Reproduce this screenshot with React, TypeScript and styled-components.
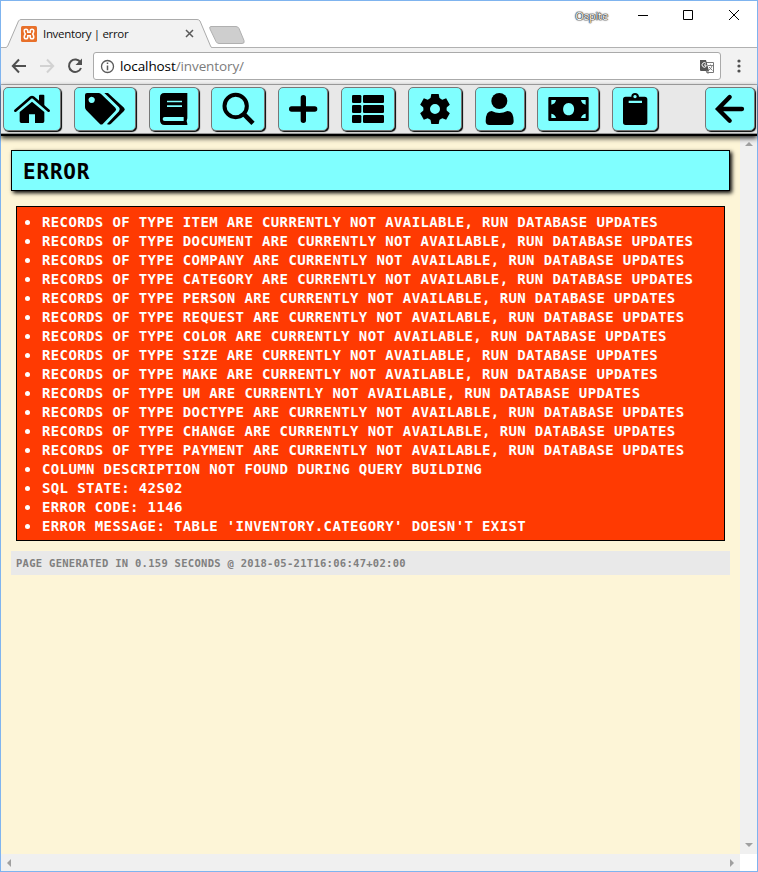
import React from "react";
import styled, { createGlobalStyle } from "styled-components";

const Global = createGlobalStyle`
  * { box-sizing: border-box; }
  html, body { margin: 0; padding: 0; }
  body { width: 758px; height: 872px; overflow: hidden; background: #fff; }
  ul, h1, p { margin: 0; padding: 0; }
`;

const BrowserWindow = styled.div`
  display: flex;
  flex-direction: column;
  width: 758px;
  height: 872px;
  border: 1px solid #7fb4ef;
  background: #fff;
  font-family: "Open Sans", "Noto Sans", sans-serif;
`;

const TitleBar = styled.header`
  display: flex;
  height: 47px;
  flex: none;
  border-bottom: 1px solid #b1b1b1;
`;

const Tab = styled.div`
  position: relative;
  display: flex;
  align-items: center;
  width: 206px;
  height: 29px;
  margin: 18px 0 -1px 5px;
  padding: 0 18px 0 15px;
`;

const TabShape = styled.svg`
  position: absolute;
  inset: 0;
`;

const Favicon = styled.svg`
  position: relative;
  flex: none;
`;

const TabTitle = styled.span`
  position: relative;
  flex: 1;
  margin-left: 6px;
  font-size: 11.5px;
  line-height: 16px;
  letter-spacing: -0.32px;
  color: #111;
  white-space: nowrap;
`;

const TabClose = styled.svg`
  position: relative;
  flex: none;
`;

const NewTab = styled.svg`
  flex: none;
  margin: 24px 0 0 -4px;
`;

const WindowControls = styled.div`
  display: flex;
  align-items: flex-start;
  margin-left: auto;
`;

const ProfileName = styled.span`
  margin: 7px 11px 0 0;
  font-size: 11px;
  line-height: 16px;
  letter-spacing: -0.1px;
  color: #fff;
  text-shadow: 0 0 1px #222, 0 0 1px #222, 0 0 1px #222, 0 0 2px #555;
`;

const ControlIcon = styled.svg`
  flex: none;
  margin: 8px 17px 0;
`;

const NavBar = styled.nav`
  display: flex;
  align-items: center;
  height: 37px;
  flex: none;
  padding: 0 9px;
  background: #f2f2f2;
  border-bottom: 1px solid #b4b4b4;
`;

const NavIcon = styled.svg`
  flex: none;
  margin-right: 10px;

  &:nth-of-type(3) {
    margin-right: 9px;
  }
`;

const AddressBar = styled.div`
  display: flex;
  align-items: center;
  width: 628px;
  height: 28px;
  padding: 0 6px;
  border: 1px solid #aaa;
  border-radius: 3px;
  background: #fff;
`;

const Url = styled.span`
  flex: 1;
  margin-left: 5px;
  font-size: 13.5px;
  line-height: 20px;
  letter-spacing: -0.1px;
  color: #7c7c7c;
  white-space: nowrap;
`;

const Host = styled.span`
  color: #000;
`;

const MenuDots = styled.svg`
  flex: none;
  margin-left: 15px;
`;

const Toolbar = styled.div`
  position: relative;
  z-index: 1;
  display: flex;
  gap: 12px;
  height: 51px;
  flex: none;
  padding: 2px 1px 0 2px;
  background: #e8e8e8;
  border-bottom: 2px solid #000;
  box-shadow: inset 0 -1px 0 #999, 0 2px 5px rgba(0, 0, 0, 0.9);
`;

const ToolButton = styled.button<{ $width: number; $tight?: boolean; $end?: boolean }>`
  flex: none;
  width: ${(p) => p.$width}px;
  height: 44px;
  margin: 0 ${(p) => (p.$end ? "1px" : "0")} 0 ${(p) => (p.$end ? "auto" : p.$tight ? "0" : "1px")};
  padding: 0;
  border: 1px solid #777;
  border-radius: 5px;
  background: #80ffff;
  box-shadow: 1px 1px 1px #000;

  &:first-child {
    margin-left: 0;
  }
`;

const ToolIcon = styled.svg`
  display: block;
  width: 100%;
  height: 42px;
`;

const Viewport = styled.div`
  display: grid;
  grid-template-columns: 739px 17px;
  grid-template-rows: 1fr 17px;
  flex: 1;
  min-height: 0;
`;

const Page = styled.main`
  padding: 14px 10px;
  background: #fdf5d7;
  font-family: "DejaVu Sans Mono", monospace;
  font-weight: bold;
  text-transform: uppercase;
`;

const Title = styled.h1`
  width: 719px;
  height: 41px;
  padding-left: 11px;
  border: 1px solid #000;
  background: #80ffff;
  box-shadow: 2px 2px 4px #000;
  font-size: 21px;
  line-height: 42px;
  letter-spacing: 0.8px;
`;

const ErrorList = styled.ul`
  width: 709px;
  margin: 15px 5px 10px;
  padding: 6px 5px 4px;
  border: 1px solid #000;
  background: #ff3a02;
  color: #fff;
  list-style: none;
`;

const ErrorItem = styled.li`
  display: flex;
  align-items: center;
  height: 19px;
  font-size: 14px;
  line-height: 19px;
  letter-spacing: 0.372px;
  white-space: pre;

  &::before {
    content: "";
    width: 5px;
    height: 5px;
    margin: 0 12px 0 3px;
    border-radius: 50%;
    background: #fff;
  }
`;

const Footer = styled.p`
  width: 719px;
  height: 24px;
  padding-left: 5px;
  background: #e9e9e9;
  color: #808080;
  font-size: 10.5px;
  line-height: 24px;
  letter-spacing: 0.287px;
`;

const VerticalScroll = styled.div`
  display: flex;
  flex-direction: column;
  justify-content: space-between;
  align-items: center;
  padding: 6px 0 7px;
  background: #f0f0f0;
`;

const HorizontalScroll = styled.div`
  display: flex;
  justify-content: space-between;
  align-items: center;
  padding: 0 6px;
  background: #f0f0f0;
`;

const Arrow = styled.svg`
  fill: #a0a0a0;
`;

type Tool = { name: string; width: number; tight?: boolean; end?: boolean; box: string; icon: React.ReactNode };

const tools: Tool[] = [
  {
    name: "Home", width: 58, box: "12 24 168 126",
    icon: (
      <>
        <path d="M117 66V47q0-3 3-3h10q3 0 3 3v34z" />
        <path d="M46 92L93 52q3-2 6 0L146 92" fill="none" stroke="#000" strokeWidth="8" strokeLinecap="round" strokeLinejoin="round" />
        <path d="M96 65L133 96v28q0 5-5 5h-23v-26H87v26H64q-5 0-5-5V96z" />
      </>
    ),
  },
  {
    name: "Tags", width: 62, box: "225 24 180 126",
    icon: (
      <>
        <path fillRule="evenodd" d="M261 39h34q5 0 9 4l42 40q5 5 0 10l-37 38q-5 5-10 0l-40-40q-4-4-4-9V45q0-6 6-6zM275 50a9.500 9.500 0 1 0 .1 0z" />
        <path d="M313 39h11l48 44q5 5 0 10l-39 38q-6 5-12 1l36-38q5-6 0-12z" />
      </>
    ),
  },
  {
    name: "Book", width: 50, box: "450 24 144 126",
    icon: (
      <path fillRule="evenodd" d="M493 39h69v76q-4 8 0 16v4h-68q-14 0-14-14V53q0-14 13-14zM501 62v5h45v-5zM501 76v5h45v-5zM494 111q-6 0-6 6t6 6h57v-12z" />
    ),
  },
  {
    name: "Search", width: 54, tight: true, box: "36 24 156 126",
    icon: (
      <>
        <circle cx="107" cy="78" r="33.500" fill="none" stroke="#000" strokeWidth="12" />
        <path d="M133 104L159 130" stroke="#000" strokeWidth="14" />
      </>
    ),
  },
  {
    name: "Add", width: 50, box: "237 24 144 126",
    icon: <path d="M310 53v68M275 87h69" stroke="#000" strokeWidth="16" strokeLinecap="round" />,
  },
  {
    name: "List", width: 54, box: "426 24 156 126",
    icon: (
      <>
        {[45, 75, 105].map((y) => (
          <React.Fragment key={y}>
            <rect x="456" y={y} width="28" height="24" rx="4" />
            <rect x="489" y={y} width="63" height="24" rx="4" />
          </React.Fragment>
        ))}
      </>
    ),
  },
  {
    name: "Settings", width: 54, box: "27 24 156 126",
    icon: (
      <>
        <circle cx="105" cy="87" r="25" fill="none" stroke="#000" strokeWidth="20" />
        {[0, 60, 120, 180, 240, 300].map((a) => (
          <path key={a} d="M91 58L94 42h22l3 16z" transform={`rotate(${a} 105 87)`} />
        ))}
      </>
    ),
  },
  {
    name: "User", width: 50, box: "228 24 144 126",
    icon: (
      <>
        <circle cx="298" cy="63" r="24" />
        <path d="M275 93q23 12 47 0 19 0 19 31 0 11-11 11h-62q-11 0-11-11 0-31 18-31z" />
      </>
    ),
  },
  {
    name: "Payments", width: 62, tight: true, box: "414 24 180 126",
    icon: (
      <path fillRule="evenodd" d="M448 51h115q3 0 3 3v66q0 3-3 3H448q-3 0-3-3V54q0-3 3-3zM506 69c-22 0-22 37 0 37s22-37 0-37zM454 60v14q12-2 14-14zM543 60q2 12 14 14V60zM454 101v13h14q-2-11-14-13zM543 114h14v-13q-12 2-14 13z" />
    ),
  },
  {
    name: "Clipboard", width: 46, box: "69 24 132 126",
    icon: (
      <path fillRule="evenodd" d="M107 50h17q0-11 11-11t12 11h17q8 0 8 8v69q0 8-8 8h-57q-8 0-8-8V58q0-8 8-8zM135 45a5 5 0 1 0 .1 0zM116 62v7h40v-7z" />
    ),
  },
  {
    name: "Back", width: 50, end: true, box: "348 24 144 126",
    icon: <path d="M419 51L384 87L419 122M386 87h70" fill="none" stroke="#000" strokeWidth="13" strokeLinecap="round" strokeLinejoin="miter" />,
  },
];

const recordTypes = [
  "item", "document", "company", "category", "person", "request", "color",
  "size", "make", "um", "doctype", "change", "payment",
];

const messages = [
  ...recordTypes.map((t) => `Records of type ${t} are currently not available, run database updates`),
  "Column description not found during query building",
  "SQL State: 42S02",
  "Error code: 1146",
  "Error message: Table 'inventory.category' doesn't exist",
];

export default function App() {
  return (
    <>
      <Global />
      <BrowserWindow>
        <TitleBar>
          <Tab>
            <TabShape width="206" height="29" viewBox="0 0 206 29">
              <path d="M0 28.500L1.500 27.500L12.500 2Q13.500.5 15 .5H191Q193 .5 194 2L204.500 27Q205 28.500 206 28.500V29H0z" fill="#f2f2f2" />
              <path d="M0 28.500L1.500 27.500L12.500 2Q13.500.5 15 .5H191Q193 .5 194 2L204.500 27Q205 28.500 206 28.500" fill="none" stroke="#ababab" />
            </TabShape>
            <Favicon width="16" height="16" viewBox="0 0 16 16">
              <rect width="16" height="16" rx="1.500" fill="#e8702a" />
              <path d="M6.800 6.300V5Q6.800 3.200 5 3.200T3.200 5Q3.200 6.300 4.300 8Q3.200 9.700 3.200 11Q3.200 12.800 5 12.800T6.800 11V9.700H9.200V11Q9.200 12.800 11 12.800T12.800 11Q12.800 9.700 11.700 8Q12.800 6.300 12.800 5Q12.800 3.200 11 3.200T9.200 5V6.300z" fill="none" stroke="#fff" strokeWidth="1.500" />
            </Favicon>
            <TabTitle>Inventory | error</TabTitle>
            <TabClose width="9" height="9" viewBox="0 0 9 9">
              <path d="M1 1l7 7M8 1l-7 7" stroke="#5a5a5a" strokeWidth="1.500" />
            </TabClose>
          </Tab>
          <NewTab width="37" height="20" viewBox="0 0 37 20">
            <path d="M3 1.500h25q2 0 3 2l5 12q1 3-2 3H11q-2 0-3-2L2 4Q1 1.500 3 1.500z" fill="#cecece" stroke="#b0b0b0" />
          </NewTab>
          <WindowControls>
            <ProfileName>Ospite</ProfileName>
            <ControlIcon width="12" height="12" viewBox="0 0 12 12"><path d="M2 6.500h10" stroke="#000" /></ControlIcon>
            <ControlIcon width="12" height="12" viewBox="0 0 12 12"><path d="M1.500 1.500h9v9h-9z" fill="none" stroke="#000" /></ControlIcon>
            <ControlIcon width="12" height="12" viewBox="0 0 12 12"><path d="M1 1l10 10M11 1L1 11" stroke="#000" /></ControlIcon>
          </WindowControls>
        </TitleBar>
        <NavBar>
          <NavIcon width="18" height="18" viewBox="0 0 18 18"><path d="M9 2.500L2.800 9L9 15.500M3 9h13" fill="none" stroke="#505050" strokeWidth="2" /></NavIcon>
          <NavIcon width="18" height="18" viewBox="0 0 18 18"><path d="M9 2.500L15.200 9L9 15.500M15 9H2" fill="none" stroke="#d2d2d2" strokeWidth="2" /></NavIcon>
          <NavIcon width="18" height="18" viewBox="0 0 18 18">
            <path d="M14.500 5.500A6.200 6.200 0 1 0 15 11" fill="none" stroke="#505050" strokeWidth="2" />
            <path d="M16 1.500V8H9.500z" fill="#505050" />
          </NavIcon>
          <AddressBar>
            <svg width="15" height="15" viewBox="0 0 15 15">
              <circle cx="7.500" cy="7.500" r="6" fill="none" stroke="#5a5a5a" strokeWidth="1.300" />
              <path d="M7.500 3.500v1.600M7.500 6.500v4.700" stroke="#5a5a5a" strokeWidth="1.500" />
            </svg>
            <Url><Host>localhost</Host>/inventory/</Url>
            <svg width="15" height="15" viewBox="0 0 15 15">
              <path d="M5.500 3.500h9v10h-7" fill="#fff" stroke="#777" />
              <path d="M1 1h6l3 11H2q-1 0-1-1z" fill="#555" />
              <path d="M7 4.300A2.300 2.300 0 1 0 7 7.500V6H5" fill="none" stroke="#fff" />
              <path d="M9 6.500h5M11.500 5.500v1M13 7q-1 3-3 4M10 8l3.500 3.500M7 12l2 2.500V12z" fill="none" stroke="#777" strokeWidth=".9" />
            </svg>
          </AddressBar>
          <MenuDots width="6" height="16" viewBox="0 0 6 16" fill="#505050">
            <circle cx="3" cy="3" r="1.600" /><circle cx="3" cy="8" r="1.600" /><circle cx="3" cy="13" r="1.600" />
          </MenuDots>
        </NavBar>
        <Toolbar>
          {tools.map((t) => (
            <ToolButton key={t.name} aria-label={t.name} $width={t.width} $tight={t.tight} $end={t.end}>
              <ToolIcon viewBox={t.box}>{t.icon}</ToolIcon>
            </ToolButton>
          ))}
        </Toolbar>
        <Viewport>
          <Page>
            <Title>Error</Title>
            <ErrorList>
              {messages.map((m) => <ErrorItem key={m}>{m}</ErrorItem>)}
            </ErrorList>
            <Footer>Page generated in 0.159 seconds @ 2018-05-21T16:06:47+02:00</Footer>
          </Page>
          <VerticalScroll>
            <Arrow width="8" height="4" viewBox="0 0 8 4"><path d="M0 4L4 0l4 4z" /></Arrow>
            <Arrow width="8" height="4" viewBox="0 0 8 4"><path d="M0 0l4 4 4-4z" /></Arrow>
          </VerticalScroll>
          <HorizontalScroll>
            <Arrow width="4" height="8" viewBox="0 0 4 8"><path d="M4 0L0 4l4 4z" /></Arrow>
            <Arrow width="4" height="8" viewBox="0 0 4 8"><path d="M0 0l4 4-4 4z" /></Arrow>
          </HorizontalScroll>
        </Viewport>
      </BrowserWindow>
    </>
  );
}
